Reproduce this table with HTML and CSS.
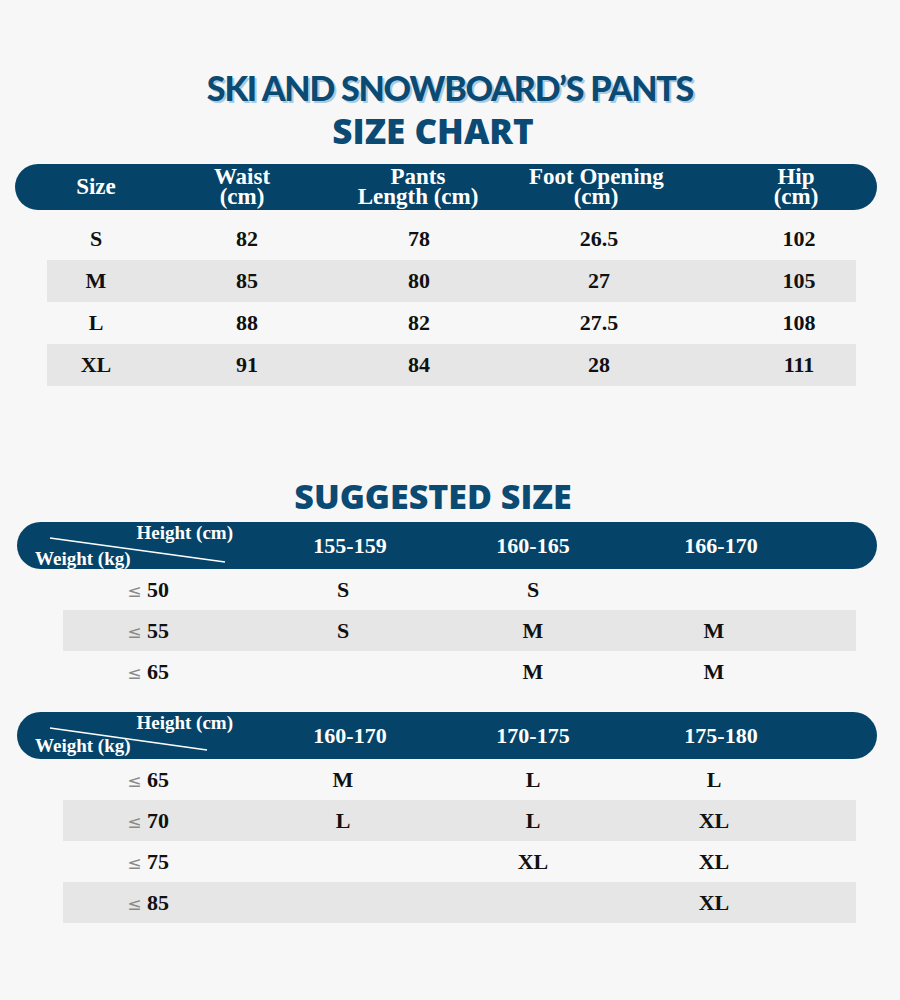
FILE: index.html
```html
<!DOCTYPE html>
<html lang="en">
<head>
<meta charset="utf-8">
<title>Ski and Snowboard's Pants Size Chart</title>
<link rel="stylesheet" href="styles.css">
</head>
<body>
<div class="page">
  <h1 class="title">
    <span class="t1">SKI AND SNOWBOARD’S PANTS</span>
    <span class="t2">SIZE CHART</span>
  </h1>

  <section class="chart">
    <div class="bar size-head">
      <div>Size</div>
      <div>Waist<br>(cm)</div>
      <div>Pants<br>Length (cm)</div>
      <div>Foot Opening<br>(cm)</div>
      <div class="c5">Hip<br>(cm)</div>
    </div>
    <div class="rows">
      <div class="srow"><div>S</div><div>82</div><div>78</div><div>26.5</div><div class="c5">102</div></div>
      <div class="srow"><div>M</div><div>85</div><div>80</div><div>27</div><div class="c5">105</div></div>
      <div class="srow"><div>L</div><div>88</div><div>82</div><div>27.5</div><div class="c5">108</div></div>
      <div class="srow"><div>XL</div><div>91</div><div>84</div><div>28</div><div class="c5">111</div></div>
    </div>
  </section>

  <h2 class="sub">SUGGESTED SIZE</h2>

  <section class="sugg">
    <div class="bar sbar">
      <div class="corner">
        <svg class="diag" width="250" height="47" viewBox="0 0 250 47"><line x1="33" y1="16" x2="208" y2="40" stroke="#fff" stroke-width="1.6"/></svg>
        <span class="h-lab">Height (cm)</span>
        <span class="w-lab">Weight (kg)</span>
      </div>
      <div>155-159</div>
      <div>160-165</div>
      <div>166-170</div>
    </div>
    <div class="srows">
      <div class="grow"><div><span class="le">≤</span> 50</div><div>S</div><div>S</div><div></div></div>
      <div class="grow"><div><span class="le">≤</span> 55</div><div>S</div><div>M</div><div>M</div></div>
      <div class="grow"><div><span class="le">≤</span> 65</div><div></div><div>M</div><div>M</div></div>
    </div>
  </section>

  <section class="sugg second">
    <div class="bar sbar">
      <div class="corner">
        <svg class="diag" width="250" height="47" viewBox="0 0 250 47"><line x1="33" y1="16" x2="190" y2="38" stroke="#fff" stroke-width="1.6"/></svg>
        <span class="h-lab">Height (cm)</span>
        <span class="w-lab tight">Weight (kg)</span>
      </div>
      <div>160-170</div>
      <div>170-175</div>
      <div>175-180</div>
    </div>
    <div class="srows">
      <div class="grow"><div><span class="le">≤</span> 65</div><div>M</div><div>L</div><div>L</div></div>
      <div class="grow"><div><span class="le">≤</span> 70</div><div>L</div><div>L</div><div>XL</div></div>
      <div class="grow"><div><span class="le">≤</span> 75</div><div></div><div>XL</div><div>XL</div></div>
      <div class="grow"><div><span class="le">≤</span> 85</div><div></div><div></div><div>XL</div></div>
    </div>
  </section>
</div>
</body>
</html>
```

FILE: styles.css
```css
html, body {
  margin: 0;
  padding: 0;
  background: #f7f7f7;
}

.page {
  width: 900px;
  height: 1000px;
  font-family: "Liberation Serif", "Times New Roman", serif;
  color: #111;
}

.title {
  margin: 0;
  padding-top: 66px;
  text-align: center;
  font-weight: normal;
}

.t1 {
  display: block;
  font-family: "Lato", sans-serif;
  font-weight: 900;
  font-size: 34px;
  letter-spacing: -1.2px;
  line-height: 43px;
  color: #0b4a72;
  text-shadow: 2px 2px 0 #a9cbe2;
}

.t2 {
  display: block;
  font-family: "Open Sans", sans-serif;
  font-weight: 800;
  font-size: 35px;
  line-height: 43px;
  color: #0b4a72;
  padding-right: 34px;
}

.chart {
  margin: 12px 23px 0 15px;
}

.bar {
  background: #054468;
  color: #fff;
  display: grid;
  align-items: center;
  text-align: center;
  font-weight: bold;
  white-space: nowrap;
}

.size-head {
  height: 46px;
  box-sizing: border-box;
  padding-bottom: 1px;
  border-radius: 23px;
  grid-template-columns: 162px 130px 222px 134px 1fr;
  font-size: 23px;
  line-height: 20px;
}

.size-head .c5 {
  padding-left: 52px;
}

.rows {
  margin: 8px 0 0 32px;
  width: 809px;
}

.srow {
  display: grid;
  grid-template-columns: 98px 204px 140px 220px 1fr;
  height: 42px;
  align-items: center;
  text-align: center;
  font-size: 22px;
  font-weight: bold;
}

.srow .c5 {
  padding-left: 33px;
}

.srow:nth-child(even),
.grow:nth-child(even) {
  background: #e6e6e6;
}

.sub {
  margin: 89px 0 4px;
  padding-right: 34px;
  text-align: center;
  font-family: "Open Sans", sans-serif;
  font-weight: 800;
  font-size: 34px;
  line-height: 43px;
  color: #0b4a72;
}

.sugg {
  margin-left: 17px;
  width: 860px;
}

.sugg.second {
  margin-top: 20px;
}

.sbar {
  height: 47px;
  border-radius: 24px;
  grid-template-columns: 250px 166px 200px 176px;
  font-size: 22px;
}

.corner {
  position: relative;
  height: 47px;
  display: flex;
  flex-direction: column;
  font-size: 19px;
  line-height: 22px;
  text-align: left;
}

.diag {
  position: absolute;
  left: 0;
  top: 0;
}

.h-lab {
  align-self: flex-end;
  padding-right: 34px;
}

.w-lab {
  margin-top: 4px;
  padding-left: 18px;
}

.w-lab.tight {
  margin-top: 1px;
}

.srows {
  margin-left: 46px;
  width: 793px;
}

.grow {
  display: grid;
  grid-template-columns: 170px 220px 160px 202px;
  height: 41px;
  align-items: center;
  text-align: center;
  font-size: 22px;
  font-weight: bold;
}

.le {
  font-family: "DejaVu Sans", sans-serif;
  font-weight: normal;
  font-size: 17px;
  color: #8a8a8a;
}
```
